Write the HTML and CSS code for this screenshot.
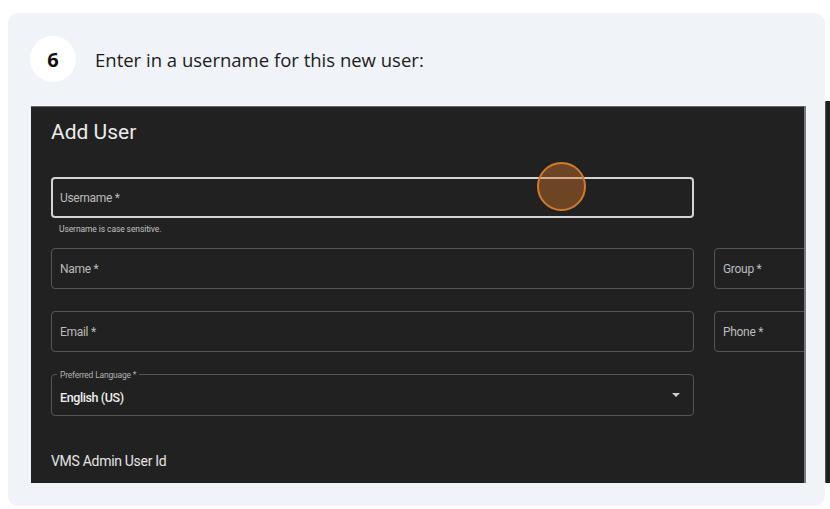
FILE: index.html
```html
<!DOCTYPE html>
<html>
<head>
<meta charset="utf-8">
<link rel="stylesheet" href="styles.css">
</head>
<body>
<div class="card">
  <div class="step">
    <div class="num">6</div>
    <div class="instr">Enter in a username for this new user:</div>
  </div>
  <div class="panel">
    <div class="title">Add User</div>
    <div class="field field-active"><span class="lbl">Username *</span></div>
    <div class="helper">Username is case sensitive.</div>
    <div class="grid">
      <div class="field"><span class="lbl">Name *</span></div>
      <div class="field"><span class="lbl">Group *</span></div>
      <div class="field"><span class="lbl">Email *</span></div>
      <div class="field"><span class="lbl">Phone *</span></div>
      <div class="field field-select">
        <span class="notch">Preferred Language *</span>
        <span class="value">English (US)</span>
        <span class="arrow"></span>
      </div>
    </div>
    <div class="vms">VMS Admin User Id</div>
    <div class="click"></div>
  </div>
</div>
<div class="strip"></div>
</body>
</html>
```

FILE: styles.css
```css
html, body { margin: 0; padding: 0; background: #ffffff; }
body {
  display: flex;
  align-items: flex-start;
  padding: 13px 0 0 8px;
  width: 830px;
  height: 509px;
  box-sizing: border-box;
  overflow: hidden;
}
.card {
  width: 817px;
  height: 493px;
  box-sizing: border-box;
  background: #f0f3f8;
  border-radius: 10px;
  padding: 23px 0 0 22px;
  flex: none;
}
.step {
  display: flex;
  align-items: center;
  gap: 19px;
}
.num {
  width: 46px;
  height: 46px;
  border-radius: 50%;
  background: #ffffff;
  display: flex;
  align-items: center;
  justify-content: center;
  font-family: "Open Sans", sans-serif;
  font-weight: 700;
  font-size: 20px;
  color: #111;
}
.instr {
  font-family: "Open Sans", sans-serif;
  font-size: 18.5px;
  color: #1c1c1c;
  margin-top: 1px;
}
.panel {
  position: relative;
  margin: 24px 0 0 1px;
  width: 775px;
  height: 377px;
  box-sizing: border-box;
  background: #212121;
  border-top: 1px solid #6a6a6a;
  border-right: 2px solid #7a7a7a;
  overflow: hidden;
  padding-left: 20px;
  font-family: Roboto, sans-serif;
}
.title {
  margin-top: 13px;
  font-size: 21px;
  line-height: 24px;
  color: #ececec;
}
.field {
  box-sizing: border-box;
  height: 41px;
  border: 1px solid #555;
  border-radius: 4px;
  display: flex;
  align-items: center;
  padding-left: 8px;
  position: relative;
}
.field-active {
  margin-top: 33px;
  width: 643px;
  border: 2px solid #d4d4d4;
  padding-left: 7px;
}
.lbl {
  font-size: 12px;
  color: #bcbcbc;
  letter-spacing: -0.3px;
}
.helper {
  margin: 6px 0 0 8px;
  font-size: 8.5px;
  line-height: 10px;
  color: #c0c0c0;
  letter-spacing: -0.1px;
}
.grid {
  margin-top: 14px;
  display: grid;
  grid-template-columns: 643px 200px;
  grid-auto-rows: 41px;
  column-gap: 20px;
  row-gap: 22px;
}
.field-select {
  height: 42px;
  padding-top: 5px;
}
.notch {
  position: absolute;
  left: 5px;
  top: -5px;
  padding: 0 3px;
  background: #212121;
  font-size: 8.5px;
  line-height: 10px;
  color: #b0b0b0;
  letter-spacing: -0.2px;
}
.value {
  font-size: 12.5px;
  font-weight: 500;
  color: #eeeeee;
  letter-spacing: -0.4px;
}
.arrow {
  position: absolute;
  right: 13px;
  top: 18px;
  width: 0;
  height: 0;
  border-left: 4px solid transparent;
  border-right: 4px solid transparent;
  border-top: 4px solid #cfcfcf;
}
.vms {
  margin-top: 38px;
  font-size: 14px;
  line-height: 16px;
  color: #e4e4e4;
  letter-spacing: -0.3px;
}
.click {
  position: absolute;
  left: 506px;
  top: 55px;
  width: 49px;
  height: 49px;
  box-sizing: border-box;
  border-radius: 50%;
  border: 2px solid #d07b2c;
  background: rgba(214, 120, 40, 0.42);
}
.strip {
  flex: none;
  margin-top: 88px;
  width: 5px;
  height: 382px;
  background: #1f1f1f;
  border-left: 1px solid #555;
  box-sizing: border-box;
}
```
